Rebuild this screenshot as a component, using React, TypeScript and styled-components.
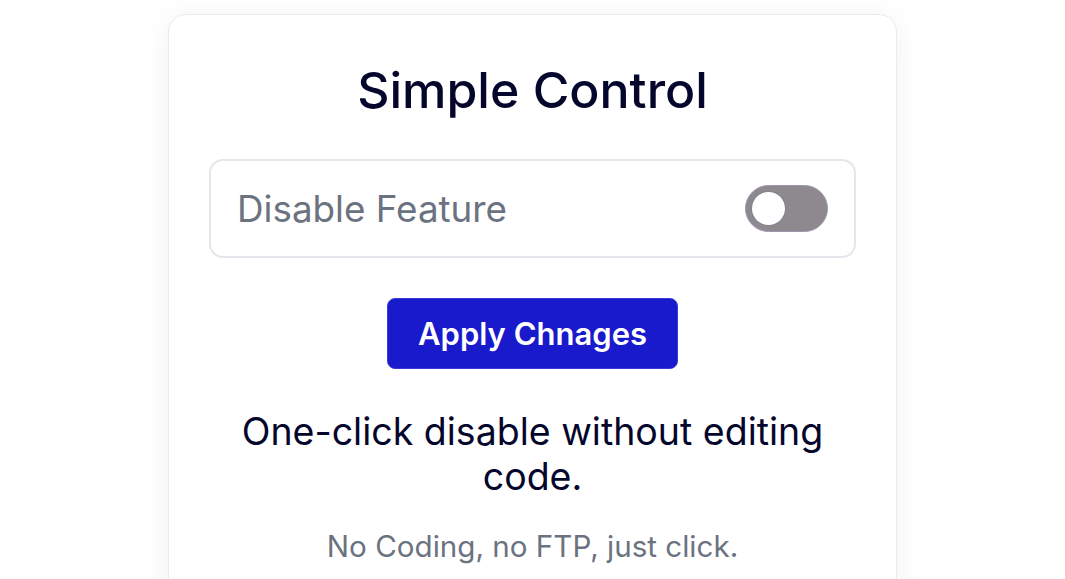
import React, { useState } from 'react';
import styled, { createGlobalStyle } from 'styled-components';

const GlobalStyle = createGlobalStyle`
    html, body {
        margin: 0;
        padding: 0;
        background: #ffffff;
        font-family: Inter, "Liberation Sans", sans-serif;
    }
`;

const Page = styled.div`
    width: 1065px;
    height: 579px;
    overflow: hidden;
    display: flex;
    justify-content: center;
    padding-top: 14px;
    box-sizing: border-box;
`;

const Card = styled.div`
    width: 729px;
    height: 620px;
    box-sizing: border-box;
    padding: 45px 40px 36px;
    background: #ffffff;
    border: 1px solid #ebebef;
    border-radius: 18px;
    box-shadow: 0 4px 30px rgba(20, 20, 60, 0.06);
    display: flex;
    flex-direction: column;
    align-items: center;
`;

const Title = styled.h1`
    margin: 0 0 39px;
    font-size: 50px;
    font-weight: 500;
    line-height: 60px;
    color: #05062b;
`;

const SettingRow = styled.div`
    width: 100%;
    height: 99px;
    box-sizing: border-box;
    padding: 0 26px 0 26px;
    border: 2px solid #e4e6ec;
    border-radius: 14px;
    display: flex;
    align-items: center;
    justify-content: space-between;
`;

const SettingLabel = styled.span`
    font-size: 36.8px;
    color: #6b7280;
`;

const Track = styled.button<{ $on: boolean }>`
    width: 83px;
    height: 47px;
    padding: 0 6px;
    border: 1px solid #9a98b0;
    border-radius: 24px;
    background: ${(p) => (p.$on ? '#1a1acd' : '#8d898f')};
    display: flex;
    align-items: center;
    justify-content: ${(p) => (p.$on ? 'flex-end' : 'flex-start')};
    cursor: pointer;
`;

const Knob = styled.span`
    width: 33px;
    height: 33px;
    border-radius: 50%;
    background: #ffffff;
    box-shadow: 0 0 0 1px rgba(120, 120, 140, 0.4);
`;

const ApplyButton = styled.button`
    margin-top: 40px;
    width: 291px;
    height: 71px;
    border: 1px solid #3a3ad8;
    border-radius: 8px;
    background: #1a1acd;
    color: #ffffff;
    font-family: Inter, "Liberation Sans", sans-serif;
    font-size: 31px;
    font-weight: 600;
    cursor: pointer;
`;

const Lead = styled.p`
    margin: 40px 0 0;
    max-width: 610px;
    text-align: center;
    font-size: 37.5px;
    line-height: 45px;
    color: #05062b;
`;

const Note = styled.p`
    margin: 29px 0 0;
    font-size: 29.6px;
    line-height: 36px;
    color: #6b7280;
`;

export default function App() {
    const [on, setOn] = useState(false);

    return (
        <>
            <GlobalStyle />
            <Page>
                <Card>
                    <Title>Simple Control</Title>
                    <SettingRow>
                        <SettingLabel>Disable Feature</SettingLabel>
                        <Track $on={on} onClick={() => setOn(!on)} aria-label="Disable Feature">
                            <Knob />
                        </Track>
                    </SettingRow>
                    <ApplyButton>Apply Chnages</ApplyButton>
                    <Lead>One-click disable without editing code.</Lead>
                    <Note>No Coding, no FTP, just click.</Note>
                </Card>
            </Page>
        </>
    );
}
